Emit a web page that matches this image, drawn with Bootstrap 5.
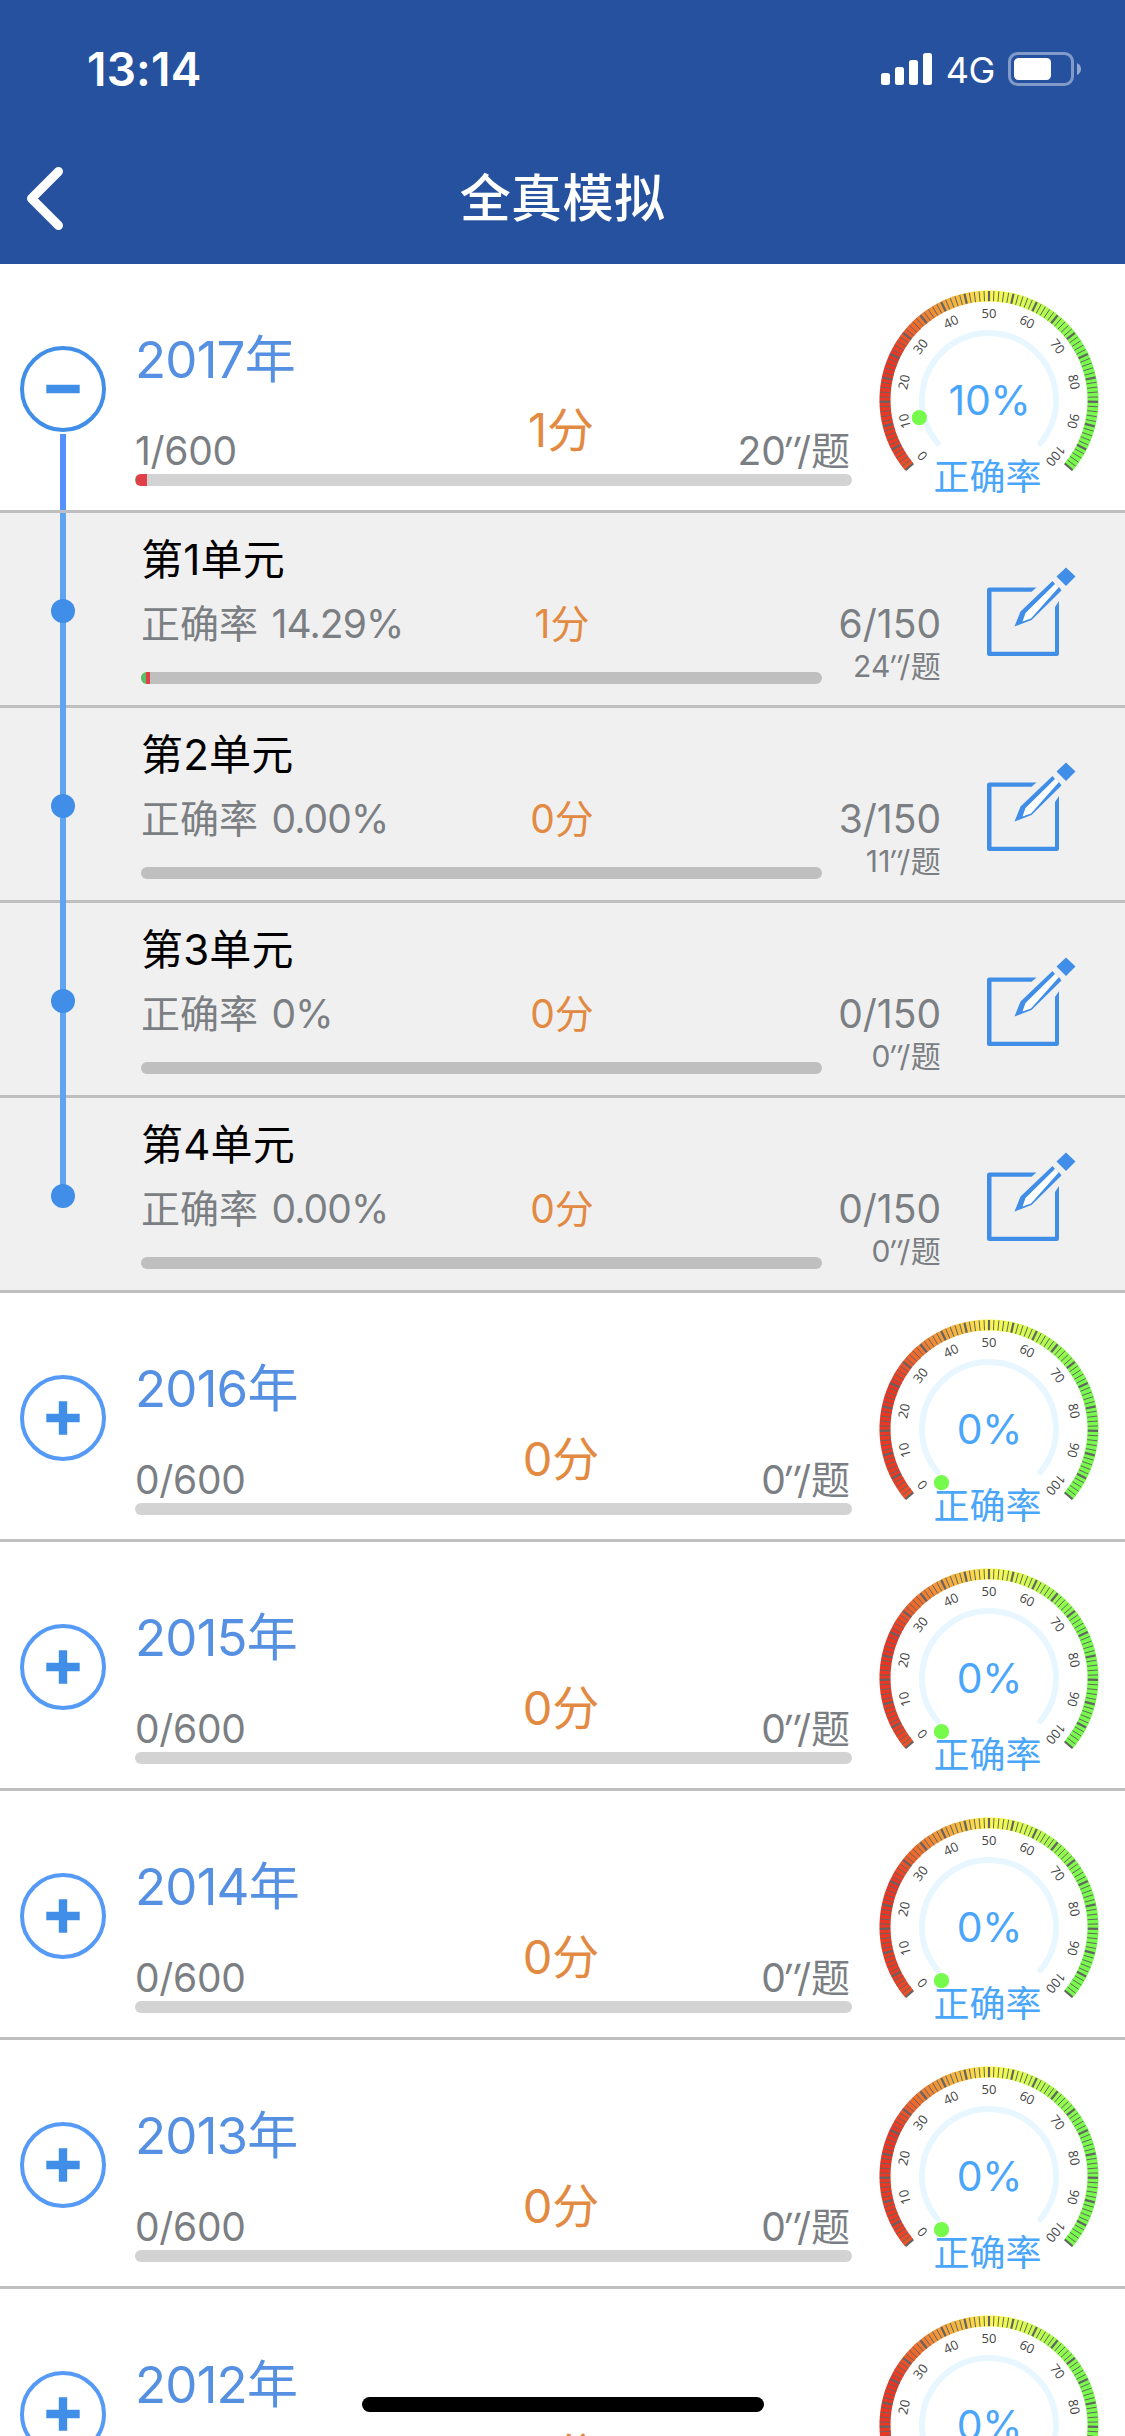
<!DOCTYPE html>
<html lang="zh-CN">
<head>
<meta charset="utf-8">
<meta name="viewport" content="width=device-width, initial-scale=1">
<title>全真模拟</title>
<link href="https://cdn.jsdelivr.net/npm/bootstrap@5.3.0/dist/css/bootstrap.min.css" rel="stylesheet">
<style>
  body { font-family: Inter, "Noto Sans CJK SC", sans-serif; color: #7b7f83; height: 2436px; overflow: hidden; }
  svg { display: block; flex: none; }
  .app-head { background: #26519f; height: 264px; color: #fff; }
  .status-line { height: 135px; padding: 0 43px 0 87px; }
  .clock { font-size: 46px; line-height: 50px; font-weight: 600; padding-top: 44px; width: 130px; letter-spacing: .2px; }
  .signal-group { padding-top: 49px; }
  .carrier { font-size: 36px; line-height: 42px; margin-left: 13px; margin-right: 13px; letter-spacing: -.4px; }
  .title-line { height: 129px; }
  .page-title { font-size: 51px; line-height: 60px; font-weight: 500; color: #fff; padding-top: 34px; letter-spacing: .4px; }
  .year-item { height: 249px; border-bottom: 3px solid #bfbfbf; background: #fff; }
  .rail { width: 126px; flex: none; }
  .year-rail { padding-top: 82px; }
  .year-rail .stem { width: 6px; height: 79px; margin-top: 2px; background: #5690ff; }
  .year-body { width: 717px; margin-left: 9px; padding-top: 66px; }
  .year-name { font-size: 51px; line-height: 60px; color: #5590e2; letter-spacing: -.8px; }
  .year-stats { display: grid; grid-template-columns: 366px 120px 229px; height: 68px; margin-top: 16px; font-size: 39px; line-height: 46px; }
  .tally { letter-spacing: -.3px; }
  .points { color: #e38a42; text-align: center; }
  .year-stats .points { font-size: 47px; line-height: 47px; }
  .tick-mark { display: inline-block; transform: skewX(-10deg); margin: 0 -.09em 0 -.07em; }
  .meter { height: 12px; border-radius: 6px; background: #d3d3d3; }
  .meter .progress-bar { background: #e14048; }
  .meter .right-part { background: #56c065; }
  .dial { margin-left: 17px; }
  .unit-item { height: 195px; border-bottom: 3px solid #bfbfbf; background: #f0f0f0; }
  .unit-rail { position: relative; }
  .unit-rail::before { content: ""; position: absolute; left: 60px; top: 0; width: 6px; height: 195px; background: #60a3f0; }
  .unit-item:last-child .unit-rail::before { height: 98px; }
  .unit-rail::after { content: ""; position: absolute; left: 51px; top: 86px; width: 24px; height: 24px; border-radius: 50%; background: #408ee8; }
  .unit-body { width: 681px; margin-left: 15px; padding-top: 22px; }
  .unit-name { font-size: 42px; line-height: 50px; color: #000; letter-spacing: .2px; }
  .unit-stats { display: grid; grid-template-columns: 361px 120px; margin-top: 15px; font-size: 39px; line-height: 48px; }
  .rate-value { letter-spacing: -.9px; margin-left: 2.5px; }
  .unit-body .meter { background: #bfbfbf; margin-top: 24px; }
  .unit-side { width: 119px; margin-right: -1px; padding-top: 87px; font-size: 39px; line-height: 48px; }
  .unit-side .pace { font-size: 30px; line-height: 36px; letter-spacing: .3px; }
  .pencil { margin: 50px 0 0 40px; }
  .home-bar { position: fixed; left: 362px; top: 2397px; width: 402px; height: 15px; border-radius: 8px; background: #000; }
</style>
</head>
<body>
<svg width="0" height="0" class="position-absolute">
  <defs>
    <symbol id="dial-face" viewBox="0 0 240 246"></symbol>
    <symbol id="plus" viewBox="0 0 86 86">
      <circle cx="43" cy="43" r="41" fill="none" stroke="#559af6" stroke-width="4"/>
      <path d="M26.3 43H59.7M43 26.3V59.7" stroke="#408ee8" stroke-width="8.4"/>
    </symbol>
    <symbol id="minus" viewBox="0 0 86 86">
      <circle cx="43" cy="43" r="41" fill="none" stroke="#408ee8" stroke-width="4"/>
      <path d="M26.3 43H59.7" stroke="#408ee8" stroke-width="8.4"/>
    </symbol>
    <symbol id="edit" viewBox="0 0 100 100">
      <path d="M49.500 24.500H56.500L51.500 28.700H11.500V88.700H75V44L79 38V90.500Q79 93 76.500 93H9.500Q7 93 7 90.500V27Q7 24.500 9.500 24.500Z" fill="#408ee8"/>
      <path d="M74 20L80 27L51 55L42.500 59L45 50Z" fill="#fff"/>
      <path d="M72.500 18L75 21L45.500 50L42.500 58.500L51 55.500L79 24L81.500 27.500L51.500 57L34.500 63.500L40.500 48.500Z" fill="#408ee8"/>
      <path d="M86 4.500L95.500 13.500L86 23L76.500 13.500Z" fill="#408ee8"/>
    </symbol>
  </defs>
</svg>

<header class="app-head">
  <div class="status-line d-flex justify-content-between align-items-start">
    <div class="clock">13:14</div>
    <div class="signal-group d-flex align-items-center">
      <svg width="52" height="42" viewBox="0 0 52 42" fill="#fff"><rect x="0" y="24" width="9" height="12" rx="2.500"/><rect x="14" y="18" width="9" height="18" rx="2.500"/><rect x="28" y="11" width="9" height="25" rx="2.500"/><rect x="42" y="4" width="9" height="32" rx="2.500"/></svg>
      <span class="carrier">4G</span>
      <svg width="74" height="42" viewBox="0 0 74 42"><rect x="1.500" y="4.500" width="63" height="31" rx="8" fill="none" stroke="#fff" stroke-opacity=".42" stroke-width="3"/><rect x="6" y="9" width="37" height="22" rx="4.500" fill="#fff"/><path d="M69 14q4 2 4 6t-4 6z" fill="#fff" fill-opacity=".5"/></svg>
    </div>
  </div>
  <nav class="title-line d-flex justify-content-center position-relative">
    <svg class="position-absolute start-0 top-0" width="90" height="120" viewBox="0 0 90 120"><path d="M58.500 36.500L31.500 63.500L58.500 90.500" fill="none" stroke="#fff" stroke-width="9" stroke-linecap="round" stroke-linejoin="round"/></svg>
    <h1 class="page-title mb-0">全真模拟</h1>
  </nav>
</header>

<main id="list"></main>
<div class="home-bar"></div>

<script src="https://cdn.jsdelivr.net/npm/bootstrap@5.3.0/dist/js/bootstrap.bundle.min.js"></script>
<script>
  // Dial: 260 degree sweep, one colour slice and one tick per percent, labels every ten.
  const CX = 120, CY = 136;
  const pt = (r, p) => { const a = (p * 2.6 - 220) * Math.PI / 180; return [(CX + r * Math.cos(a)).toFixed(2), (CY + r * Math.sin(a)).toFixed(2)]; };
  const stops = [[0,235,85,40],[4,233,60,36],[25,233,52,35],[32,237,100,42],[40,242,160,58],[45,248,200,68],[50,254,248,82],[58,215,252,80],[66,150,250,77],[74,120,250,76],[100,120,250,76]];
  const shade = p => {
    let i = 1; while (stops[i][0] < p) i++;
    const a = stops[i - 1], b = stops[i], t = (p - a[0]) / (b[0] - a[0]);
    return `rgb(${[1,2,3].map(k => Math.round(a[k] + (b[k] - a[k]) * t))})`;
  };
  let face = '';
  for (let p = 0; p < 100; p++)
    face += `<path d="M${pt(104, p)}A104 104 0 0 1 ${pt(104, p + 1.08)}" fill="none" stroke="${shade(p + .5)}" stroke-width="11"/>`;
  for (let p = 0; p <= 100; p++)
    face += `<path d="M${pt(98.8, p)}L${pt(109, p)}" stroke="#646464" stroke-width="${p % 5 ? 1 : 2.2}"/>`;
  for (let p = 0; p <= 100; p += 10) {
    const [x, y] = pt(87, p);
    face += `<text transform="translate(${x} ${y}) rotate(${p * 2.6 - 130})" y="4.700" text-anchor="middle" font-family="Open Sans, sans-serif" font-size="13" fill="#444">${p}</text>`;
  }
  face += `<path d="M${pt(67, 0)}A67 67 0 1 1 ${pt(67, 100)}" fill="none" stroke="#e8f7ff" stroke-width="6" stroke-linecap="round"/>`;
  document.getElementById('dial-face').innerHTML = face;

  const dial = (rate, x, y) => `<svg class="dial" width="240" height="246" viewBox="0 0 240 246">
    <use href="#dial-face" width="240" height="246"/><circle cx="${x}" cy="${y}" r="7.600" fill="#76fb4c"/>
    <g fill="#4aa6fa" text-anchor="middle"><text x="120.500" y="151" font-size="41" letter-spacing="-.3">${rate}</text><text x="118.500" y="226" font-size="36">正确率</text></g></svg>`;
  const meter = (good, bad) => `<div class="meter d-flex overflow-hidden"><div class="progress-bar right-part" style="width:${good}%"></div><div class="progress-bar" style="width:${bad}%"></div></div>`;
  const perItem = s => `${s}<span class="tick-mark">″</span>/题`;
  const year = (y, open, done, score, pace, rate, kx, ky, good, bad) => `<section class="year-item d-flex overflow-hidden">
    <div class="rail year-rail d-flex flex-column align-items-center"><svg width="86" height="86"><use href="#${open ? 'minus' : 'plus'}"/></svg>${open ? '<div class="stem"></div>' : ''}</div>
    <div class="year-body"><div class="year-name">${y}年</div>
      <div class="year-stats"><span class="tally align-self-end">${done}/600</span><span class="points">${score}分</span><span class="align-self-end text-end">${perItem(pace)}</span></div>
      ${meter(good, bad)}</div>
    ${dial(rate, kx, ky)}</section>`;
  const unit = (n, rate, score, done, pace, good, bad) => `<div class="unit-item d-flex">
    <div class="rail unit-rail"></div>
    <div class="unit-body"><div class="unit-name">第${n}单元</div>
      <div class="unit-stats"><span>正确率 <span class="rate-value">${rate}</span></span><span class="points">${score}分</span></div>${meter(good, bad)}</div>
    <div class="unit-side text-end text-nowrap d-flex flex-column align-items-end"><span>${done}/150</span><span class="pace">${perItem(pace)}</span></div>
    <svg class="pencil" width="100" height="100"><use href="#edit"/></svg></div>`;

  document.getElementById('list').innerHTML =
    year(2017, true, 1, 1, 20, '10%', 50.3, 153.7, 0.12, 1.55) +
    '<div>' + unit(1, '14.29%', 1, 6, 24, .75, .6) + unit(2, '0.00%', 0, 3, 11, 0, 0) + unit(3, '0%', 0, 0, 0, 0, 0) + unit(4, '0.00%', 0, 0, 0, 0, 0) + '</div>' +
    [2016, 2015, 2014, 2013, 2012].map(y => year(y, false, 0, 0, 0, '0%', 72.5, 189.7, 0, 0)).join('');
</script>
</body>
</html>
